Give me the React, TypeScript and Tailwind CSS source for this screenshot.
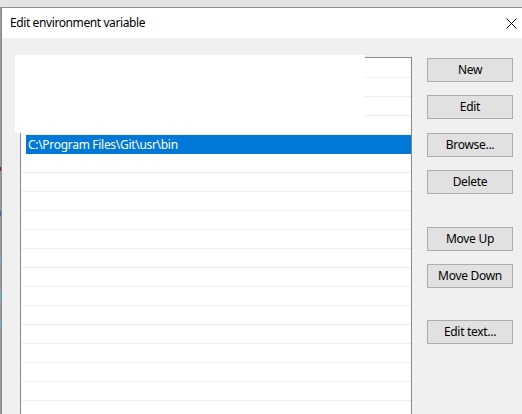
import React from "react";

const buttons: { label: string; mt: string }[] = [
  { label: "New", mt: "mt-[20px]" },
  { label: "Edit", mt: "mt-[13px]" },
  { label: "Browse...", mt: "mt-[14px]" },
  { label: "Delete", mt: "mt-[13px]" },
  { label: "Move Up", mt: "mt-[33px]" },
  { label: "Move Down", mt: "mt-[13px]" },
  { label: "Edit text...", mt: "mt-[32px]" },
];

export default function App() {
  const rowsBefore = [0, 1, 2, 3];
  const rowsAfter = Array.from({ length: 16 }, (_, i) => i);
  return (
    <div
      className="relative w-[522px] h-[414px] overflow-hidden bg-[#e4e4e4] flex flex-col text-[12px] text-black tracking-[-0.3px]"
      style={{ fontFamily: '"Noto Sans", "Segoe UI", sans-serif' }}
    >
      <div className="h-[7px] shrink-0 bg-[#e4e4e4]" />
      <div className="flex flex-1 min-h-0">
        <div className="w-[1px] shrink-0 flex flex-col bg-[#9a9a9a]">
          <div className="h-[160px]" />
          <div className="h-[4px] bg-[#7a1a4a]" />
          <div className="h-[40px]" />
          <div className="h-[5px] bg-[#3a6ab0]" />
          <div className="h-[40px]" />
          <div className="h-[6px] bg-[#6ab0d8]" />
          <div className="h-[30px]" />
          <div className="h-[8px] bg-[#6ab0d8]" />
          <div className="h-[20px]" />
          <div className="h-[10px] bg-[#6ab0d8]" />
        </div>
        <div className="flex-1 flex flex-col border-t border-l border-[#8a8a8a] min-h-0">
          <div className="h-[30px] shrink-0 bg-white flex items-center pl-[8px]">
            <span className="leading-none tracking-[-0.4px]">Edit environment variable</span>
            <svg
              className="ml-auto mr-[5px]"
              width="11"
              height="11"
              viewBox="0 0 11 11"
            >
              <path d="M0.5 0.5 L10.5 10.5 M10.5 0.5 L0.5 10.5" stroke="#000" strokeWidth="1" fill="none" />
            </svg>
          </div>
          <div className="flex-1 bg-[#f0f0f0] flex items-start min-h-0">
            <div className="ml-[18px] mt-[19px] w-[392px] h-[400px] border border-[#828790] bg-white pt-[1px] flex flex-col shrink-0">
              {rowsBefore.map((i) => (
                <div key={"a" + i} className="h-[19px] shrink-0 ml-[1px] border-b border-[#efefef]" />
              ))}
              <div className="h-[19px] shrink-0 ml-[5px] bg-[#0078d7] text-white flex items-center pl-[2px] leading-none">
                C:\Program Files\Git\usr\bin
              </div>
              {rowsAfter.map((i) => (
                <div key={"b" + i} className="h-[19px] shrink-0 ml-[1px] border-b border-[#efefef]" />
              ))}
            </div>
            <div className="ml-[15px] flex flex-col">
              {buttons.map((b) => (
                <div
                  key={b.label}
                  className={`${b.mt} w-[86px] h-[24px] border border-[#adadad] bg-[#e1e1e1] flex items-center justify-center leading-none`}
                >
                  {b.label}
                </div>
              ))}
            </div>
          </div>
        </div>
      </div>
      <div className="absolute left-[15px] top-[55px] w-[350px] h-[78px] bg-white" />
    </div>
  );
}
